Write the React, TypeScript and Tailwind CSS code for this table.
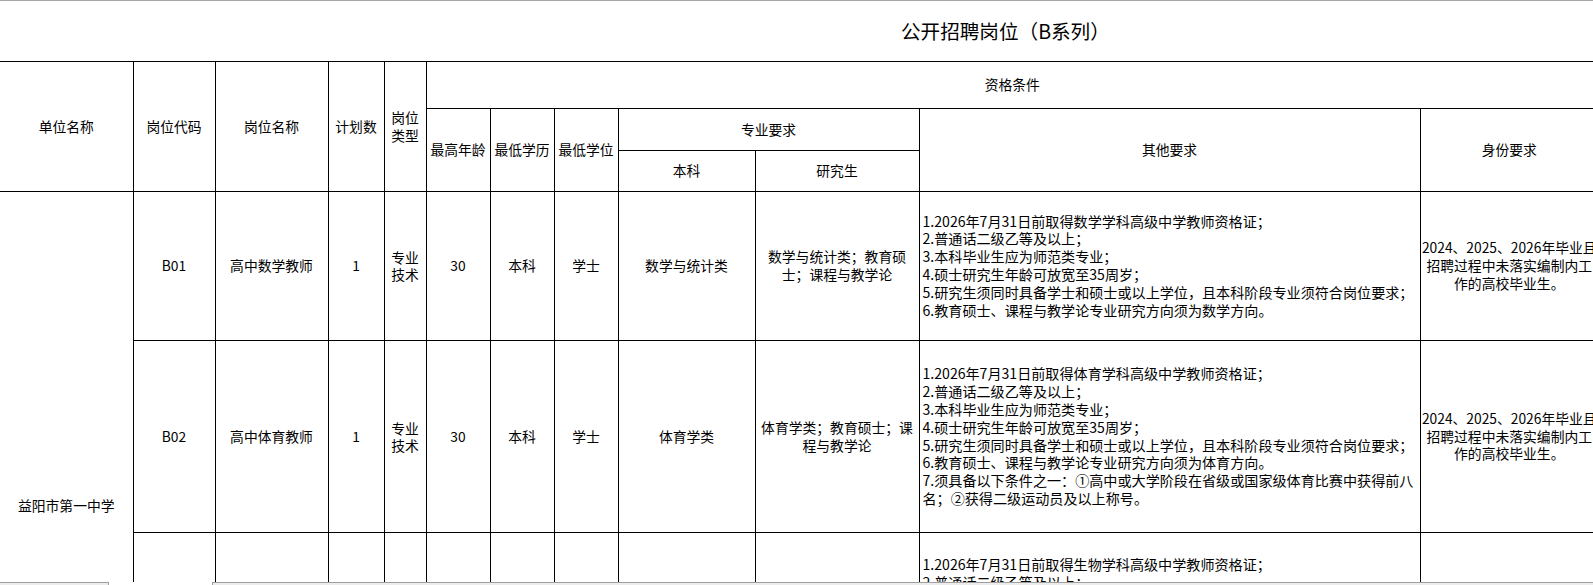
const rows = [
  {
    code: "B01",
    name: "高中数学教师",
    num: "1",
    age: "30",
    edu: "本科",
    degree: "学士",
    ug: ["数学与统计类"],
    pg: ["数学与统计类；教育硕", "士；课程与教学论"],
    other: [
      "1.2026年7月31日前取得数学学科高级中学教师资格证；",
      "2.普通话二级乙等及以上；",
      "3.本科毕业生应为师范类专业；",
      "4.硕士研究生年龄可放宽至35周岁；",
      "5.研究生须同时具备学士和硕士或以上学位，且本科阶段专业须符合岗位要求；",
      "6.教育硕士、课程与教学论专业研究方向须为数学方向。",
    ],
    h: "h-[149px]",
  },
  {
    code: "B02",
    name: "高中体育教师",
    num: "1",
    age: "30",
    edu: "本科",
    degree: "学士",
    ug: ["体育学类"],
    pg: ["体育学类；教育硕士；课", "程与教学论"],
    other: [
      "1.2026年7月31日前取得体育学科高级中学教师资格证；",
      "2.普通话二级乙等及以上；",
      "3.本科毕业生应为师范类专业；",
      "4.硕士研究生年龄可放宽至35周岁；",
      "5.研究生须同时具备学士和硕士或以上学位，且本科阶段专业须符合岗位要求；",
      "6.教育硕士、课程与教学论专业研究方向须为体育方向。",
      "7.须具备以下条件之一：①高中或大学阶段在省级或国家级体育比赛中获得前八",
      "名；②获得二级运动员及以上称号。",
    ],
    h: "h-[192px]",
  },
  {
    code: "B03",
    name: "高中生物教师",
    num: "1",
    age: "30",
    edu: "本科",
    degree: "学士",
    ug: ["生物科学类"],
    pg: ["生物学；教育硕士；课程", "与教学论"],
    other: [
      "1.2026年7月31日前取得生物学科高级中学教师资格证；",
      "2.普通话二级乙等及以上；",
      "3.本科毕业生应为师范类专业；",
      "4.硕士研究生年龄可放宽至35周岁；",
      "5.研究生须同时具备学士和硕士或以上学位，且本科阶段专业须符合岗位要求；",
      "6.教育硕士、课程与教学论专业研究方向须为生物方向。",
    ],
    h: "h-[154px]",
  },
];

const identity = ["2024、2025、2026年毕业且", "招聘过程中未落实编制内工", "作的高校毕业生。"];

const cell = "border border-black p-0 text-center align-middle font-normal";

function Lines({ lines }: { lines: string[] }) {
  return (
    <>
      {lines.map((l, i) => (
        <div key={i} className="whitespace-nowrap">
          {l}
        </div>
      ))}
    </>
  );
}

export default function App() {
  return (
    <div className="relative h-[585px] w-full overflow-hidden bg-white text-black font-['Noto_Sans_CJK_SC','Noto_Sans',sans-serif]">
      <div className="flex h-[61px] items-center border-t border-[#a6a6a6] pl-[901px] text-[19.6px] leading-none">
        公开招聘岗位（B系列）
      </div>

      <table className="w-[1598px] table-fixed border-collapse text-[13.8px] leading-[17.8px]">
        <colgroup>
          <col className="w-[133px]" />
          <col className="w-[82px]" />
          <col className="w-[113px]" />
          <col className="w-[56px]" />
          <col className="w-[42px]" />
          <col className="w-[64px]" />
          <col className="w-[64px]" />
          <col className="w-[64px]" />
          <col className="w-[137px]" />
          <col className="w-[164px]" />
          <col className="w-[501px]" />
          <col className="w-[178px]" />
        </colgroup>
        <thead>
          <tr className="h-[47px]">
            <th rowSpan={3} className={`${cell} border-l-0`}>单位名称</th>
            <th rowSpan={3} className={cell}>岗位代码</th>
            <th rowSpan={3} className={cell}>岗位名称</th>
            <th rowSpan={3} className={cell}>计划数</th>
            <th rowSpan={3} className={cell}>
              岗位
              <br />
              类型
            </th>
            <th colSpan={7} className={`${cell} border-r-0`}>资格条件</th>
          </tr>
          <tr className="h-[42px]">
            <th rowSpan={2} className={cell}>最高年龄</th>
            <th rowSpan={2} className={cell}>最低学历</th>
            <th rowSpan={2} className={cell}>最低学位</th>
            <th colSpan={2} className={cell}>专业要求</th>
            <th rowSpan={2} className={cell}>其他要求</th>
            <th rowSpan={2} className={`${cell} border-r-0`}>身份要求</th>
          </tr>
          <tr className="h-[41px]">
            <th className={cell}>本科</th>
            <th className={cell}>研究生</th>
          </tr>
        </thead>
        <tbody>
          {rows.map((r, i) => (
            <tr key={r.code} className={r.h}>
              {i === 0 && (
                <td rowSpan={4} className={`${cell} border-l-0`}>
                  益阳市第一中学
                </td>
              )}
              <td className={cell}>{r.code}</td>
              <td className={cell}>{r.name}</td>
              <td className={cell}>{r.num}</td>
              <td className={`${cell} leading-[17px]`}>
                专业
                <br />
                技术
              </td>
              <td className={cell}>{r.age}</td>
              <td className={cell}>{r.edu}</td>
              <td className={cell}>{r.degree}</td>
              <td className={cell}>
                <Lines lines={r.ug} />
              </td>
              <td className={cell}>
                <Lines lines={r.pg} />
              </td>
              <td className={`${cell} pl-[3px] text-left text-[14.1px]`}>
                <Lines lines={r.other} />
              </td>
              <td className={`${cell} border-r-0`}>
                <Lines lines={identity} />
              </td>
            </tr>
          ))}
          <tr className="h-[133px]">
            <td className={cell} />
            <td className={cell} />
            <td className={cell} />
            <td className={cell} />
            <td className={cell} />
            <td className={cell} />
            <td className={cell} />
            <td className={cell} />
            <td className={cell} />
            <td className={cell} />
            <td className={`${cell} border-r-0`} />
          </tr>
        </tbody>
      </table>

      <div className="absolute inset-x-0 bottom-0 flex h-[3px] bg-white">
        <div className="h-full w-[109px] border-t border-r border-[#a0a0a0] bg-[#ececec]" />
        <div className="w-[103px]" />
        <div className="h-full flex-1 border-t border-l border-[#a0a0a0] bg-[#ececec]" />
      </div>
    </div>
  );
}
